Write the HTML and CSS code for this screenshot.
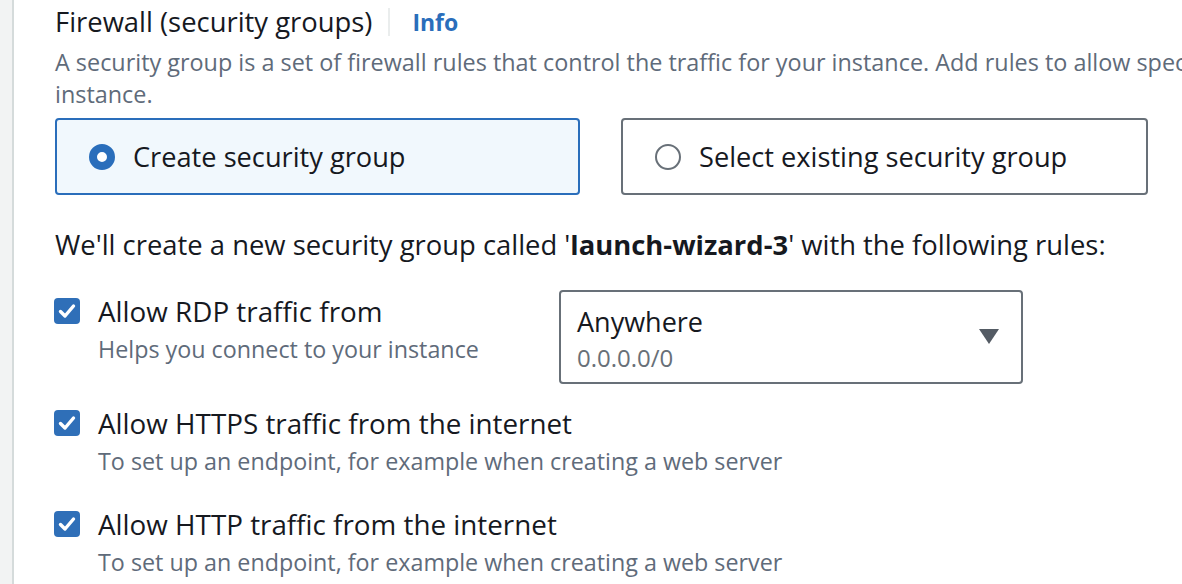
FILE: index.html
```html
<!DOCTYPE html>
<html>
<head>
<meta charset="utf-8">
<link rel="stylesheet" href="styles.css">
</head>
<body>
<div class="app">
  <div class="rail"></div>
  <div class="main">
    <div class="heading">
      <span class="title">Firewall (security groups)</span>
      <span class="divider"></span>
      <a class="info">Info</a>
    </div>
    <p class="desc">A security group is a set of firewall rules that control the traffic for your instance. Add rules to allow specific traffic to reach your<br>instance.</p>
    <div class="tiles">
      <div class="tile tile-on">
        <span class="radio radio-on"></span>
        <span class="tile-label">Create security group</span>
      </div>
      <div class="tile">
        <span class="radio"></span>
        <span class="tile-label">Select existing security group</span>
      </div>
    </div>
    <p class="intro">We'll create a new security group called '<b>launch-wizard-3</b>' with the following rules:</p>
    <div class="rule rule-first">
      <div class="check-col">
        <div class="check-line">
          <span class="checkbox"><svg viewBox="0 0 26 26" width="26" height="26"><path d="M6.5 13.5 L11 18 L19.5 8" fill="none" stroke="#fff" stroke-width="3.4" stroke-linecap="round" stroke-linejoin="round"/></svg></span>
          <span class="label">Allow RDP traffic from</span>
        </div>
        <div class="hint">Helps you connect to your instance</div>
      </div>
      <div class="select">
        <div class="select-text">
          <div class="select-main">Anywhere</div>
          <div class="select-sub">0.0.0.0/0</div>
        </div>
        <svg class="caret" viewBox="0 0 20 16" width="20" height="16"><path d="M0 0 H20 L10 15 Z" fill="#545b64"/></svg>
      </div>
    </div>
    <div class="rule">
      <div class="check-col">
        <div class="check-line">
          <span class="checkbox"><svg viewBox="0 0 26 26" width="26" height="26"><path d="M6.5 13.5 L11 18 L19.5 8" fill="none" stroke="#fff" stroke-width="3.4" stroke-linecap="round" stroke-linejoin="round"/></svg></span>
          <span class="label">Allow HTTPS traffic from the internet</span>
        </div>
        <div class="hint">To set up an endpoint, for example when creating a web server</div>
      </div>
    </div>
    <div class="rule">
      <div class="check-col">
        <div class="check-line">
          <span class="checkbox"><svg viewBox="0 0 26 26" width="26" height="26"><path d="M6.5 13.5 L11 18 L19.5 8" fill="none" stroke="#fff" stroke-width="3.4" stroke-linecap="round" stroke-linejoin="round"/></svg></span>
          <span class="label">Allow HTTP traffic from the internet</span>
        </div>
        <div class="hint">To set up an endpoint, for example when creating a web server</div>
      </div>
    </div>
  </div>
</div>
</body>
</html>
```

FILE: styles.css
```css
* { box-sizing: border-box; }
html, body { margin: 0; padding: 0; background: #fff; }
body {
  font-family: "Open Sans", "Noto Sans", sans-serif;
  color: #16191f;
  width: 1182px;
  height: 584px;
  overflow: hidden;
}
.app { display: flex; height: 584px; overflow: hidden; }
.rail {
  width: 14px;
  flex: none;
  background: #f2f3f3;
  border-right: 2px solid #d5dbdb;
}
.main {
  flex: 1;
  min-width: 0;
  padding-left: 41px;
  white-space: nowrap;
  overflow: hidden;
}
.heading {
  display: flex;
  align-items: center;
  height: 32px;
  margin-top: 6px;
}
.title { font-size: 27.4px; line-height: 32px; }
.divider {
  width: 2px;
  height: 28px;
  background: #eaeded;
  margin: 0 22px 0 16px;
}
.info { font-size: 23px; line-height: 32px; font-weight: 700; color: #2a6ebb; }
.desc {
  margin: 8px 0 0;
  font-size: 23.4px;
  line-height: 32px;
  color: #5f6b7a;
  height: 64px;
}
.tiles {
  display: flex;
  gap: 41px;
  margin-top: 8px;
}
.tile {
  width: 527px;
  height: 77px;
  border: 2px solid #687078;
  border-radius: 4px;
  display: flex;
  align-items: center;
  padding-left: 32px;
  flex: none;
}
.tile-on {
  width: 525px;
  border-color: #2a6ebb;
  background: #f1f8fd;
  padding-left: 32px;
}
.radio {
  width: 26px;
  height: 26px;
  border-radius: 50%;
  border: 2px solid #687078;
  flex: none;
  margin-right: 18px;
}
.radio-on { border: 8px solid #2a6ebb; background: #fff; }
.tile-label { font-size: 27.2px; line-height: 32px; }
.intro {
  margin: 34px 0 0;
  font-size: 27.4px;
  line-height: 32px;
}
.intro b { font-weight: 700; }
.rule {
  display: flex;
  align-items: flex-start;
  margin-top: 35px;
}
.rule-first { margin-top: 29px; }
.rule-first .check-col { padding-top: 7px; }
.rule-first + .rule { margin-top: 25px; }
.check-col { width: 504px; flex: none; }
.check-line { display: flex; align-items: center; height: 28px; }
.checkbox {
  width: 26px;
  height: 26px;
  border-radius: 4px;
  background: #2f6fb8;
  flex: none;
  margin-right: 18px;
  margin-left: -1px;
  display: flex;
}
.label { font-size: 27.8px; line-height: 28px; }
.hint {
  margin-top: 10px;
  padding-left: 43px;
  font-size: 23.3px;
  line-height: 28px;
  color: #5f6b7a;
}
.select {
  width: 464px;
  height: 94px;
  border: 2px solid #687078;
  border-radius: 4px;
  display: flex;
  align-items: center;
  justify-content: space-between;
  padding: 0 22px 0 16px;
  flex: none;
}
.select-text { padding-top: 6px; }
.select-main { font-size: 27px; line-height: 32px; }
.select-sub { font-size: 24px; line-height: 32px; color: #687078; margin-top: 4px; }
```
